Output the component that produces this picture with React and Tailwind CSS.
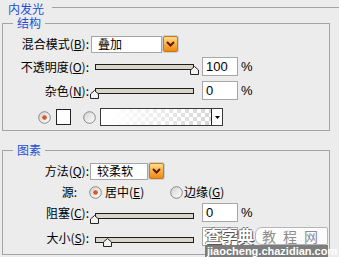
import React from "react";

const num = "[font-family:'Liberation_Sans',Arial,sans-serif] text-[13px]";

const Radio = ({ checked }) => (
  <svg width="13" height="13" viewBox="0 0 13 13" className="shrink-0">
    <defs>
      <linearGradient id="rbg" x1="0" y1="0" x2="1" y2="1">
        <stop offset="0" stopColor="#d2d2d2" />
        <stop offset="1" stopColor="#ffffff" />
      </linearGradient>
    </defs>
    <circle cx="6.5" cy="6.5" r="5.8" fill="url(#rbg)" stroke="#878787" strokeWidth="1" />
    {checked && <circle cx="6.5" cy="6.5" r="2.3" fill="#d8551b" />}
  </svg>
);

const DropButton = () => (
  <div className="w-[17px] h-[18px] p-px rounded-[3px] bg-[#c5d0de] shrink-0">
    <div className="w-full h-full rounded-[2px] border border-[#d0770e] bg-linear-to-b from-[#ffdc8c] via-[#fbb042] to-[#ee8a0c] flex items-center justify-center">
      <svg width="9" height="6" viewBox="0 0 9 6">
        <path d="M1 1L4.5 4.5L8 1" fill="none" stroke="#5c1a00" strokeWidth="2" />
      </svg>
    </div>
  </div>
);

const Dropdown = ({ value, box, shift }) => (
  <div className={`flex items-center ${shift}`}>
    <div className={`${box} h-[17px] bg-white border border-[#a5a5a5] flex items-center pl-[6px] leading-[14px]`}>
      {value}
    </div>
    <DropButton />
  </div>
);

const Slider = ({ thumb, track, knob }) => (
  <div className="relative w-[108px] h-[19px] ml-[1px] shrink-0">
    <div className={`${track} ml-[5px] w-[99px] h-[6px] border border-[#1e1e1e] bg-[#d8d5c9]`} />
    <svg width="9" height="9" viewBox="0 0 9 9" className={`absolute ${knob} ${thumb}`}>
      <path d="M0.5 8.5V4L4.5 0.5L8.5 4V8.5Z" fill="#f2f2ee" stroke="#262626" />
    </svg>
  </div>
);

// the last field sits under the site watermark, so its value and unit aren't shown
const NumField = ({ value, unit = true }) => (
  <div className="flex items-center ml-[4px]">
    <div className={`w-[36px] h-[19px] bg-white border border-[#a7a7a7] pl-[3px] flex items-center ${num}`}>
      {value}
    </div>
    {unit && <span className={`ml-[3px] ${num}`}>%</span>}
  </div>
);

const Label = ({ children, w = "w-[86px]" }) => (
  <div className={`${w} text-right shrink-0 leading-[14px]`}>{children}</div>
);

const Key = ({ k }) => <span className="underline underline-offset-1">{k}</span>;

export default function App() {
  return (
    <div className="relative w-[339px] h-[257px] overflow-hidden bg-[#ececec] text-black text-[12px] [font-family:'Noto_Sans_CJK_SC','Noto_Sans',sans-serif]">
      {/* 内发光 */}
      <div className="flex items-start h-[14px] mt-[1px]">
        <span className="ml-[8px] leading-[13px] mt-[1px] text-[#1c4fd8]">内发光</span>
        <div className="flex-1 ml-[8px] mt-[6px] h-px bg-[#a3a3a3]" />
      </div>

      {/* 结构 */}
      <fieldset className="mt-[1px] ml-[2px] w-[328px] border border-[#a3a3a3] pb-[4px]">
        <legend className="ml-[10px] px-[4px] leading-[14px] text-[#1c4fd8]">结构</legend>

        <div className="flex items-center h-[18px] mt-[5px]">
          <Label>混合模式(<Key k="B" />):</Label>
          <Dropdown value="叠加" box="w-[71px]" shift="ml-[2px]" />
        </div>

        <div className="flex items-center h-[19px] mt-[4px]">
          <Label>不透明度(<Key k="O" />):</Label>
          <Slider track="mt-[7px]" knob="top-[9px]" thumb="left-[100px]" />
          <NumField value="100" />
        </div>

        <div className="flex items-center h-[19px] mt-[5px]">
          <Label>杂色(<Key k="N" />):</Label>
          <Slider track="mt-[7px]" knob="top-[9px]" thumb="left-[0px]" />
          <NumField value="0" />
        </div>

        <div className="flex items-center h-[18px] mt-[8px] pl-[35px]">
          <Radio checked />
          <div className="ml-[5px] w-[15px] h-[16px] bg-white border border-[#222]" />
          <div className="ml-[12px]">
            <Radio />
          </div>
          <div className="ml-[4px] w-[123px] h-[18px] flex border border-[#3a3a3a]">
            <div className="flex-1 [background-image:linear-gradient(to_right,#ffffff_10%,rgba(255,255,255,0)),repeating-conic-gradient(#d6d6d6_0%_25%,#ffffff_0%_50%)] [background-size:100%_100%,8px_8px]" />
            <div className="w-[11px] bg-white border-l border-[#222] flex items-center justify-center">
              <svg width="5" height="3" viewBox="0 0 5 3">
                <path d="M0 0H5L2.5 3Z" fill="#000" />
              </svg>
            </div>
          </div>
        </div>
      </fieldset>

      {/* 图素 */}
      <fieldset className="mt-[12px] ml-[2px] w-[328px] border border-[#a3a3a3] pb-[8px]">
        <legend className="ml-[10px] px-[4px] leading-[14px] text-[#1c4fd8]">图素</legend>

        <div className="flex items-center h-[18px] mt-[5px]">
          <Label>方法(<Key k="Q" />):</Label>
          <Dropdown value="较柔软" box="w-[58px]" shift="ml-[1px]" />
        </div>

        <div className="flex items-center h-[18px] mt-[3px]">
          <Label w="w-[74px]">源:</Label>
          <div className="ml-[12px] w-[81px] flex items-center">
            <Radio checked />
            <span className="ml-[3px] leading-[14px]">居中(<Key k="E" />)</span>
          </div>
          <Radio />
          <span className="ml-[1px] leading-[14px]">边缘(<Key k="G" />)</span>
        </div>

        <div className="flex items-center h-[19px] mt-[2px]">
          <Label>阻塞(<Key k="C" />):</Label>
          <Slider track="mt-[10px]" knob="top-[12px]" thumb="left-[0px]" />
          <NumField value="0" />
        </div>

        <div className="flex items-center h-[19px] mt-[5px]">
          <div className="pt-[3px]">
            <Label>大小(<Key k="S" />):</Label>
          </div>
          <Slider track="mt-[10px]" knob="top-[11px]" thumb="left-[13px]" />
          <NumField value="" unit={false} />
        </div>
      </fieldset>

      {/* watermark */}
      <div className="absolute left-[205px] top-[226px] w-[123px] h-[31px] flex flex-col">
        <div className="flex items-end h-[19px]">
          <span className="text-[17px] leading-[18px] font-bold text-white tracking-[-1px] [text-shadow:1px_1px_0_#555,-1px_0_0_#777,0_-1px_0_#777]">
            查字典
          </span>
          <span className="ml-[2px] flex-1 h-[18px] rounded-l-[7px] rounded-r-[2px] border border-[#b5b5b5] bg-white/85 text-[#8e8e8e] text-[14px] leading-[16px] tracking-[7px] pl-[6px]">
            教程网
          </span>
        </div>
        <div className="mt-auto h-[12px] bg-[#7d7d7d] text-white text-[11px] leading-[12px] font-bold pl-[2px] [font-family:'Liberation_Sans',Arial,sans-serif]">
          jiaocheng.chazidian.com
        </div>
      </div>
    </div>
  );
}
